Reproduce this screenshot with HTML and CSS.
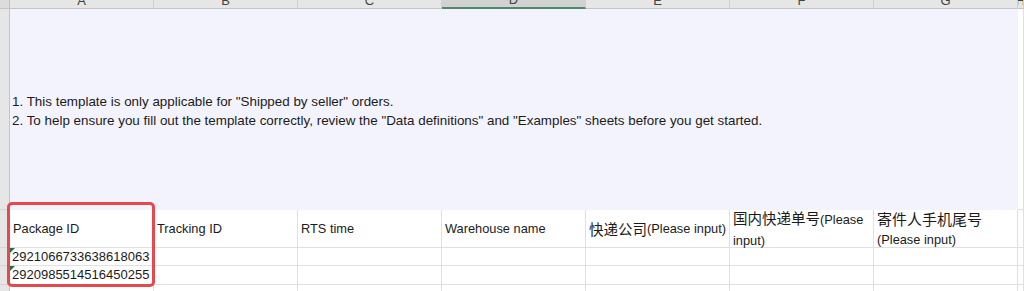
FILE: index.html
```html
<!DOCTYPE html>
<html lang="en">

<head>
    <meta charset="UTF-8">
    <title>Shipped by seller template</title>
    <link rel="stylesheet" href="styles.css">
</head>

<body>
    <div class="sheet">
        <!-- column letters -->
        <div class="corner"></div>
        <div class="col-head"><span>A</span></div>
        <div class="col-head"><span>B</span></div>
        <div class="col-head"><span>C</span></div>
        <div class="col-head active"><span>D</span></div>
        <div class="col-head"><span>E</span></div>
        <div class="col-head"><span>F</span></div>
        <div class="col-head"><span>G</span></div>
        <div class="col-head"><span>H</span></div>

        <!-- row 1: instructions -->
        <div class="row-head"></div>
        <div class="notes">
            <p>1. This template is only applicable for "Shipped by seller" orders.</p>
            <p>2. To help ensure you fill out the template correctly, review the "Data definitions" and "Examples" sheets before you get started.</p>
        </div>
        <div class="cell"></div>

        <!-- row 2: field names -->
        <div class="row-head"></div>
        <div class="cell field">Package ID</div>
        <div class="cell field">Tracking ID</div>
        <div class="cell field">RTS time</div>
        <div class="cell field">Warehouse name</div>
        <div class="cell field"><span class="zh">快递公司</span>(Please input)</div>
        <div class="cell field wrap"><div><span class="zh">国内快递单号</span>(Please input)</div></div>
        <div class="cell field wrap"><div><span class="zh big">寄件人手机尾号</span>(Please input)</div></div>
        <div class="cell"></div>

        <!-- data rows -->
        <div class="row-head"></div>
        <div class="cell num">2921066733638618063</div>
        <div class="cell"></div>
        <div class="cell"></div>
        <div class="cell"></div>
        <div class="cell"></div>
        <div class="cell"></div>
        <div class="cell"></div>
        <div class="cell"></div>

        <div class="row-head"></div>
        <div class="cell num">2920985514516450255</div>
        <div class="cell"></div>
        <div class="cell"></div>
        <div class="cell"></div>
        <div class="cell"></div>
        <div class="cell"></div>
        <div class="cell"></div>
        <div class="cell"></div>

        <div class="row-head"></div>
        <div class="cell"></div>
        <div class="cell"></div>
        <div class="cell"></div>
        <div class="cell"></div>
        <div class="cell"></div>
        <div class="cell"></div>
        <div class="cell"></div>
        <div class="cell"></div>

        <div class="highlight"></div>
    </div>
</body>

</html>
```

FILE: styles.css
```css
* {
    box-sizing: border-box;
}

body {
    margin: 0;
    background-color: #fff;
    font-family: "Liberation Sans", Arial, sans-serif;
    font-size: 13px;
    color: #1b1b1b;
    overflow: hidden;
}

.sheet {
    position: relative;
    display: grid;
    grid-template-columns: 10px repeat(7, 144px) 1fr;
    grid-template-rows: 9px 201px 38px 18px 19px 20px;
    height: 291px;
}

.corner {
    background-color: #dcdcdc;
    border-right: 1px solid #c4c4c4;
    border-bottom: 1px solid #c4c4c4;
}

.col-head {
    display: flex;
    align-items: flex-end;
    justify-content: center;
    overflow: hidden;
    background-color: #e6e6e6;
    border-right: 1px solid #d0d0d0;
    border-bottom: 1px solid #c4c4c4;
    color: #444;
}

.col-head span {
    line-height: 12px;
    margin-bottom: 1px;
}

.col-head.active {
    background-color: #d2d2d2;
    border-bottom: 2px solid #4f8a68;
}

.row-head {
    background-color: #e6e6e6;
    border-right: 1px solid #c4c4c4;
    border-bottom: 1px solid #d4d4d4;
}

.notes {
    grid-column: 2 / 9;
    display: flex;
    flex-direction: column;
    justify-content: center;
    padding: 2px 0 0 2px;
    background-color: #f3f3fe;
    font-size: 13.4px;
    line-height: 19px;
}

.notes p {
    margin: 0;
    white-space: nowrap;
}

.cell {
    position: relative;
    border-right: 1px solid #e0e0e0;
    border-bottom: 1px solid #e0e0e0;
    background-color: #fff;
}

.field {
    display: flex;
    align-items: center;
    padding: 0 3px;
    font-size: 12.8px;
    white-space: nowrap;
}

.field .zh {
    font-family: "Noto Sans CJK SC", sans-serif;
    font-size: 14.5px;
}

.field.wrap {
    white-space: normal;
    line-height: 21px;
}

.field.wrap .zh {
    line-height: 21px;
}

.field.wrap .big {
    font-size: 15px;
    display: block;
}

.num {
    padding: 0 2px;
    font-size: 13px;
    line-height: 18px;
}

.num::before {
    content: "";
    position: absolute;
    top: 0;
    left: 0;
    border-top: 5px solid #1e7145;
    border-right: 5px solid transparent;
}

.highlight {
    position: absolute;
    left: 7px;
    top: 202px;
    width: 148px;
    height: 85px;
    border: 3px solid #e5484d;
    border-radius: 5px;
}
```
